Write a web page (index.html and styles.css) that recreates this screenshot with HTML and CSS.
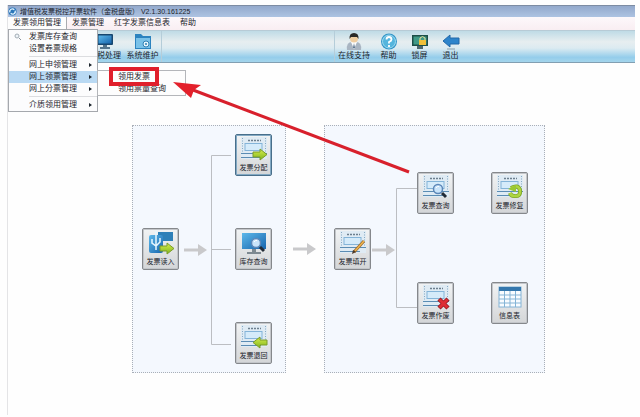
FILE: index.html
```html
<!DOCTYPE html>
<html lang="zh-CN">
<head>
  <meta charset="UTF-8">
  <title>增值税发票税控开票软件</title>
  <link rel="stylesheet" href="styles.css">
</head>
<body>

  <svg width="0" height="0" class="defs">
    <defs>
      <linearGradient id="green" x1="0" y1="0" x2="0" y2="1">
        <stop offset="0" stop-color="#d9ee4c"/>
        <stop offset="1" stop-color="#7fb51c"/>
      </linearGradient>
      <linearGradient id="blue" x1="0" y1="0" x2="1" y2="1">
        <stop offset="0" stop-color="#5db8ea"/>
        <stop offset="1" stop-color="#1765ad"/>
      </linearGradient>
      <symbol id="invoice" viewBox="0 0 28 26">
        <rect x="1" y="1" width="26" height="22" fill="#dfebf4"/>
        <path d="M2.500 2v14M25.500 2v14" stroke="#87a9c3" stroke-dasharray="1 1.500"/>
        <path d="M8 4.500h13" stroke="#6d7f8e" stroke-width="1.500" stroke-dasharray="2 1"/>
        <rect x="5" y="7.500" width="17" height="7" fill="#d5ebfa" stroke="#84b4d8"/>
        <path d="M1 17.500h26M1 21.500h20" stroke="#5b8cb3"/>
      </symbol>
      <symbol id="arrow-right" viewBox="0 0 16 13">
        <path d="M1 4h7V1l7 5.500L8 12V9H1z" fill="url(#green)" stroke="#7b9c2b"/>
      </symbol>
      <symbol id="lens" viewBox="0 0 16 16">
        <circle cx="6" cy="6" r="4.500" fill="#c9e4fa" stroke="#5c87b8" stroke-width="1.500"/>
        <path d="M4 5q1-2 3-1.500" fill="none" stroke="#fff"/>
        <path d="M10 10l4 4" stroke="#222b36" stroke-width="3"/>
      </symbol>
      <symbol id="flow" viewBox="0 0 24 14">
        <path d="M0 5.500h14V1l9 6-9 6V8.500H0z" fill="#c9c9cb"/>
      </symbol>
    </defs>
  </svg>

  <div class="window">
    <header class="titlebar">
      <svg class="logo" viewBox="0 0 10 10">
        <circle cx="5" cy="5" r="4.500" fill="#2b76b9"/>
        <path d="M2 6a3 3 0 0 1 5-3M8 4a3 3 0 0 1-5 3" fill="none" stroke="#e4f5ff" stroke-width="1.500"/>
      </svg>
      <h1>增值税发票税控开票软件（金税盘版） V2.1.30.161225</h1>
    </header>

    <nav class="menubar">
      <div class="menu-item open">
        <button type="button">发票领用管理</button>
        <div class="menu">
          <button type="button">发票库存查询
            <svg class="mark" viewBox="0 0 8 8"><circle cx="3" cy="3" r="2" fill="#eef3f7" stroke="#a3adb5"/><path d="M5 5l2 2" stroke="#8b949b"/></svg>
          </button>
          <button type="button">设置卷票规格</button>
          <hr>
          <button type="button" class="more">网上申领管理</button>
          <button type="button" class="more selected">网上领票管理</button>
          <button type="button" class="more">网上分票管理</button>
          <hr>
          <button type="button" class="more">介质领用管理</button>
          <div class="submenu">
            <button type="button">领用发票</button>
            <button type="button">领用票量查询</button>
            <span class="highlight"></span>
          </div>
        </div>
      </div>
      <div class="menu-item"><button type="button">发票管理</button></div>
      <div class="menu-item"><button type="button">红字发票信息表</button></div>
      <div class="menu-item"><button type="button">帮助</button></div>
    </nav>

    <div class="toolbar">
      <div class="tools tools-left">
        <button type="button">
          <svg viewBox="0 0 18 17"><rect x="1" y="1" width="16" height="11" rx="1" fill="#17466f"/><rect x="2.500" y="2.500" width="13" height="8" fill="url(#blue)"/><path d="M7 12h4v2h3v2H4v-2h3z" fill="#55758c"/></svg>
          报税处理
        </button>
        <button type="button">
          <svg viewBox="0 0 18 17"><path d="M1 1h6l2 2h8v13H1z" fill="#2c83bf"/><path d="M2 5h14v10H2z" fill="#79c1e8"/><circle cx="12" cy="11" r="3" fill="#e8f6fd" stroke="#3280b4"/><circle cx="12" cy="11" r="1" fill="#3280b4"/></svg>
          系统维护
        </button>
      </div>
      <div class="tools tools-right">
        <button type="button">
          <svg viewBox="0 0 18 17"><path d="M2 17q-1-8 5-8h4q6 0 5 8z" fill="#a9b5c2"/><path d="M6 9l3 7 3-7z" fill="#fff"/><path d="M9 10l-1 5h2z" fill="#56718c"/><circle cx="9" cy="5.500" r="4" fill="#efcda0"/><path d="M4.500 6Q4 0 9 0t4.500 6L12 4H6z" fill="#2a2926"/></svg>
          在线支持
        </button>
        <button type="button">
          <svg viewBox="0 0 18 17"><circle cx="9" cy="8.500" r="8" fill="#3195c8"/><circle cx="9" cy="8.500" r="6.500" fill="#55b5dd" stroke="#a2dcf1"/><path d="M6.500 6.500Q6.500 4 9 4t2.500 2.500Q11.500 8 9 9v1.500M9 12v2" fill="none" stroke="#fff" stroke-width="1.800"/></svg>
          帮助
        </button>
        <button type="button">
          <svg viewBox="0 0 18 17"><rect x="1" y="2" width="16" height="11" fill="#1d4e48"/><rect x="2.500" y="3.500" width="13" height="8" fill="#419986"/><path d="M6 13h6v3H6z" fill="#4e676d"/><path d="M9 7V5q2.500-3 5 0v2" fill="none" stroke="#eadf98"/><rect x="8" y="7" width="7" height="5" fill="#f0bf38"/></svg>
          锁屏
        </button>
        <button type="button">
          <svg viewBox="0 0 18 17"><path d="M1 8l7-6v3h9v6H8v3z" fill="#2e84cb" stroke="#2268a8"/><path d="M5 16h8" stroke="#899eab"/></svg>
          退出
        </button>
      </div>
    </div>

    <main class="stage">
      <section class="panel panel-stock">
        <svg class="lines" viewBox="0 0 152 246">
          <path d="M98 29.500H78.500v189H98M78 123.500h20" fill="none" stroke="#bcbec2"/>
          <use href="#flow" x="51" y="117" width="24" height="14"/>
        </svg>
        <button type="button" class="tile read">
          <svg viewBox="0 0 28 26"><path d="M11 2h15v9H11z" fill="#2e80b8"/><rect x="2" y="5" width="14" height="18" rx="2" fill="url(#blue)"/><path d="M9 1v19M5 9v4l4 3 4-4V8" fill="none" stroke="#e6f7ff" stroke-width="1.500"/><use href="#arrow-right" x="12" y="12" width="16" height="13"/></svg>
          发票读入
        </button>
        <button type="button" class="tile assign active">
          <svg viewBox="0 0 28 26"><use href="#invoice"/><use href="#arrow-right" x="12" y="12" width="16" height="13"/></svg>
          发票分配
        </button>
        <button type="button" class="tile stock">
          <svg viewBox="0 0 28 26"><rect x="2" y="3" width="24" height="16" fill="url(#blue)"/><path d="M12 19h4v3h5v2H7v-2h5z" fill="#7d8991"/><use href="#lens" x="10" y="7" width="16" height="16"/></svg>
          库存查询
        </button>
        <button type="button" class="tile back">
          <svg viewBox="0 0 28 26"><use href="#invoice"/><use href="#arrow-right" x="12" y="12" width="16" height="13" transform="matrix(-1 0 0 1 40 0)"/></svg>
          发票退回
        </button>
      </section>

      <svg class="between" viewBox="0 0 24 14"><use href="#flow"/></svg>

      <section class="panel panel-issue">
        <svg class="lines" viewBox="0 0 219 246">
          <path d="M92 62.500H71.500v119H92M71 123.500" fill="none" stroke="#bcbec2"/>
          <use href="#flow" x="47" y="117" width="24" height="14"/>
        </svg>
        <button type="button" class="tile fill">
          <svg viewBox="0 0 28 26"><use href="#invoice"/><path d="M15 22l10-11" stroke="#9b6a31" stroke-width="3"/><path d="M16 21l9-10" stroke="#efb54c" stroke-width="1.500"/><path d="M13 24l1-4 3 2z" fill="#4c3928"/></svg>
          发票填开
        </button>
        <button type="button" class="tile query">
          <svg viewBox="0 0 28 26"><use href="#invoice"/><use href="#lens" x="10" y="9" width="16" height="16"/></svg>
          发票查询
        </button>
        <button type="button" class="tile repair">
          <svg viewBox="0 0 28 26"><use href="#invoice"/><path d="M15 14q7-4 9 2 1 7-6 6-3 0-4-3" fill="none" stroke="#7da629" stroke-width="4"/><path d="M15 14q7-4 9 2 1 7-6 6-3 0-4-3" fill="none" stroke="#add53f" stroke-width="2.500"/><path d="M12 15l8-4v7z" fill="#9ac831"/></svg>
          发票修复
        </button>
        <button type="button" class="tile cancel">
          <svg viewBox="0 0 28 26"><use href="#invoice"/><path d="M17 15l9 9M26 15l-9 9" stroke="#951a20" stroke-width="4.500"/><path d="M17.500 15.500l8 8M25.500 15.500l-8 8" stroke="#de2d34" stroke-width="3"/></svg>
          发票作废
        </button>
        <button type="button" class="tile info">
          <svg viewBox="0 0 28 26"><rect x="3" y="3" width="22" height="20" fill="#f8fcff" stroke="#84b4d6"/><rect x="3" y="3" width="22" height="4" fill="#3477ad"/><path d="M3 11h22M3 15h22M3 19h22M8.500 7v16M14 7v16M19.500 7v16" stroke="#84b4d6"/></svg>
          信息表
        </button>
      </section>
    </main>

    <svg class="pointer" viewBox="0 0 240 94">
      <path d="M236 91L20 9" stroke="#d8202c" stroke-width="3"/>
      <path d="M0 1l28 3-7 5-3 8z" fill="#e3202b"/>
    </svg>
  </div>

</body>
</html>
```

FILE: styles.css
```css
* {
  box-sizing: border-box;
}
body {
  margin: 0;
  background: #fefefe;
  color: #1c242c;
  font-family: "Liberation Sans", "Noto Sans CJK SC", sans-serif;
  font-size: 8px;
  line-height: 12px;
}
button {
  margin: 0;
  padding: 0;
  border: 0;
  background: none;
  color: inherit;
  font: inherit;
  white-space: nowrap;
}
.defs {
  position: absolute;
}
.window {
  position: relative;
  min-height: calc(100vh - 7px);
  margin: 5px 5px 0 7px;
  border-left: 1px solid #e4e4e6;
}

/* title and menu bar */
.titlebar {
  display: flex;
  align-items: center;
  gap: 3px;
  height: 12px;
  border-top: 1px solid #7d8ca3;
  background: linear-gradient(#93a9cc, #adc3e2);
}
.logo {
  width: 9px;
  height: 9px;
}
h1 {
  margin: 0;
  font-size: 7px;
  font-weight: normal;
  white-space: nowrap;
}
.menubar {
  display: flex;
  height: 13px;
  background: linear-gradient(#fdf8fb, #f9eef2);
}
.menu-item {
  position: relative;
  padding: 0 5px;
}
.menu-item.open {
  background: #fdfdfd;
  border-right: 1px solid #a9abb0;
}

/* drop-down menus */
.menu {
  position: absolute;
  z-index: 2;
  top: 12px;
  left: 0;
  width: 90px;
  padding-top: 1px;
  border: 1px solid #a5a8ad;
  background: #fcfcfd;
}
.menu button {
  display: block;
  position: relative;
  width: 100%;
  padding-left: 20px;
  text-align: left;
}
.menu hr {
  margin: 1px 0 2px 20px;
  border: 0;
  border-top: 1px solid #dcdde0;
}
.menu .selected {
  background: #b9d9f3;
}
.more::after {
  content: "";
  position: absolute;
  top: 4px;
  right: 5px;
  border: 2px solid transparent;
  border-left: 3px solid #1c242c;
  border-right: 0;
}
.mark {
  position: absolute;
  top: 2px;
  left: 5px;
  width: 8px;
  height: 8px;
}
.submenu {
  position: absolute;
  top: 40px;
  left: 88px;
  width: 89px;
  border: 1px solid #b4b6ba;
  background: #fdfdfd;
}
.highlight {
  position: absolute;
  top: -4px;
  left: 11px;
  width: 50px;
  height: 19px;
  border: 4px solid #e01f2b;
}

/* toolbar */
.toolbar {
  display: flex;
  height: 33px;
  padding-left: 78px;
  border-top: 1px solid #b7cbd6;
  border-bottom: 1px solid #829fb2;
  background: linear-gradient(#bfdbe6, #e7eef0 35%, #dcebf1 55%, #94cdeb 85%, #a4d5ec);
}
.tools {
  display: flex;
}
.tools button {
  display: flex;
  flex-direction: column;
  align-items: center;
  padding-top: 2px;
}
.tools svg {
  width: 18px;
  height: 17px;
}
.tools-left {
  flex: 0 0 248px;
}
.tools-left button {
  width: 38px;
}
.tools-left button:last-child {
  border-right: 1px solid #b5cdd9;
}
.tools-right {
  border-left: 1px solid #b5cdd9;
}
.tools-right button {
  width: 31px;
}
.tools-right button:first-child {
  width: 38px;
}

/* process diagram */
.stage {
  display: flex;
  align-items: center;
  gap: 7px;
  padding: 62px 0 0 124px;
}
.panel {
  position: relative;
  flex: none;
  height: 248px;
  border: 1px dotted #a9afb8;
  background: #f4f8fe;
}
.panel-stock {
  width: 154px;
}
.panel-issue {
  width: 221px;
}
.between {
  flex: none;
  width: 24px;
  height: 14px;
}
.lines {
  display: block;
  width: 100%;
  height: 100%;
}
.tile {
  position: absolute;
  display: flex;
  flex-direction: column;
  align-items: center;
  width: 37px;
  height: 42px;
  padding-top: 1px;
  border: 1px solid #85888c;
  border-radius: 2px;
  background: linear-gradient(#f1f3f4, #d4d6d8);
  box-shadow: inset 0 0 0 1px #c3c6ca;
  font-size: 7px;
}
.tile svg {
  width: 28px;
  height: 26px;
}
.tile.active {
  border-color: #496f8b;
  box-shadow: inset 0 0 0 1px #82a9c4;
}
.read { left: 9px; top: 102px; }
.assign { left: 102px; top: 8px; }
.stock { left: 102px; top: 102px; }
.back { left: 102px; top: 196px; }
.fill { left: 9px; top: 102px; }
.query { left: 92px; top: 46px; }
.repair { left: 166px; top: 46px; }
.cancel { left: 92px; top: 156px; }
.info { left: 166px; top: 156px; }

/* red pointer drawn over menu and diagram */
.pointer {
  position: absolute;
  z-index: 3;
  top: 76px;
  left: 165px;
  width: 240px;
  height: 94px;
  pointer-events: none;
}
```
